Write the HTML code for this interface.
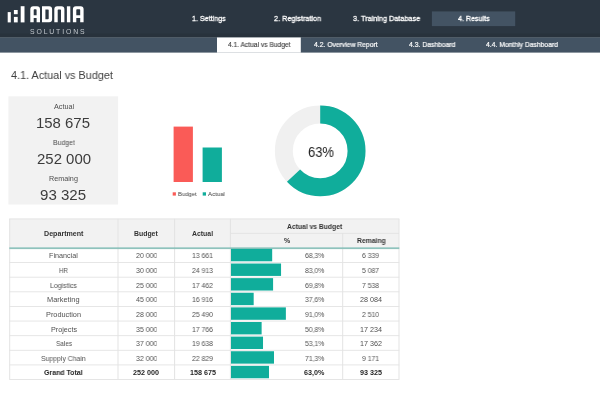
<!DOCTYPE html>
<html><head><meta charset="utf-8"><title>4.1. Actual vs Budget</title>
<style>
html,body{margin:0;padding:0;background:#fff;}
body{width:600px;height:403px;position:relative;overflow:hidden;font-family:"Liberation Sans", sans-serif;}
.b{position:absolute;}
.t{position:absolute;white-space:pre;line-height:1;transform-origin:0 50%;font-family:"Liberation Sans", sans-serif;will-change:transform;}
</style></head><body>
<svg class="b" style="left:0;top:0" width="600" height="403" viewBox="0 0 600 403">
<rect x="0.00" y="0.00" width="600.00" height="37.50" fill="#2b3641"/>
<rect x="0.00" y="33.50" width="600.00" height="4.00" fill="#28323c"/>
<rect x="0.00" y="37.50" width="600.00" height="15.10" fill="#435363"/>
<rect x="431.90" y="11.40" width="83.30" height="14.70" fill="#435363"/>
<rect x="217.00" y="37.50" width="83.80" height="15.20" fill="#ffffff"/>
<rect x="8.40" y="96.30" width="109.70" height="108.20" fill="#f2f2f2"/>
<rect x="173.60" y="126.60" width="19.30" height="55.40" fill="#fa5b57"/>
<rect x="202.60" y="147.50" width="19.30" height="34.50" fill="#10ad9b"/>
<rect x="172.70" y="192.30" width="3.20" height="3.30" fill="#fa5b57"/>
<rect x="202.70" y="192.30" width="3.30" height="3.30" fill="#10ad9b"/>
<rect x="9.30" y="218.70" width="389.70" height="28.70" fill="#f2f2f2"/>
<rect x="9.20" y="218.80" width="1.00" height="160.70" fill="#e3e3e3"/>
<rect x="117.50" y="218.80" width="1.00" height="160.70" fill="#e3e3e3"/>
<rect x="174.10" y="218.80" width="1.00" height="160.70" fill="#e3e3e3"/>
<rect x="229.90" y="218.80" width="1.00" height="160.70" fill="#e3e3e3"/>
<rect x="398.50" y="218.80" width="1.00" height="160.70" fill="#e3e3e3"/>
<rect x="342.20" y="233.00" width="1.00" height="146.50" fill="#e3e3e3"/>
<rect x="9.30" y="218.50" width="390.00" height="0.90" fill="#e3e3e3"/>
<rect x="230.00" y="232.90" width="169.00" height="0.90" fill="#e3e3e3"/>
<rect x="9.30" y="262.12" width="390.00" height="0.90" fill="#e3e3e3"/>
<rect x="9.30" y="276.74" width="390.00" height="0.90" fill="#e3e3e3"/>
<rect x="9.30" y="291.36" width="390.00" height="0.90" fill="#e3e3e3"/>
<rect x="9.30" y="305.98" width="390.00" height="0.90" fill="#e3e3e3"/>
<rect x="9.30" y="320.60" width="390.00" height="0.90" fill="#e3e3e3"/>
<rect x="9.30" y="335.22" width="390.00" height="0.90" fill="#e3e3e3"/>
<rect x="9.30" y="349.84" width="390.00" height="0.90" fill="#e3e3e3"/>
<rect x="9.30" y="364.46" width="390.00" height="0.90" fill="#e3e3e3"/>
<rect x="9.30" y="379.08" width="390.00" height="0.90" fill="#e3e3e3"/>
<rect x="9.30" y="247.30" width="390.00" height="1.80" fill="#8fc2bc"/>
<rect x="231.00" y="248.90" width="41.18" height="12.40" fill="#10ad9b"/>
<rect x="231.00" y="263.52" width="50.05" height="12.40" fill="#10ad9b"/>
<rect x="231.00" y="278.14" width="42.09" height="12.40" fill="#10ad9b"/>
<rect x="231.00" y="292.76" width="22.67" height="12.40" fill="#10ad9b"/>
<rect x="231.00" y="307.38" width="54.87" height="12.40" fill="#10ad9b"/>
<rect x="231.00" y="322.00" width="30.63" height="12.40" fill="#10ad9b"/>
<rect x="231.00" y="336.62" width="32.02" height="12.40" fill="#10ad9b"/>
<rect x="231.00" y="351.24" width="42.99" height="12.40" fill="#10ad9b"/>
<rect x="231.00" y="365.86" width="37.99" height="12.40" fill="#10ad9b"/>
<circle cx="320.2" cy="150.9" r="36.35" fill="none" stroke="#f0f0f0" stroke-width="17.90"/>
<circle cx="320.2" cy="150.9" r="36.35" fill="none" stroke="#10ad9b" stroke-width="17.90" stroke-dasharray="143.89 228.39" transform="rotate(-90 320.2 150.9)"/>
</svg>
<svg class="b" style="left:0;top:0" width="100" height="38" viewBox="0 0 100 38">
<g fill="#ffffff">
<rect x="7.7" y="12.1" width="3.1" height="10.3"/>
<rect x="13.9" y="10" width="3.8" height="4.2"/>
<rect x="13.9" y="16.9" width="3.8" height="5.5"/>
<rect x="20.7" y="6.2" width="3.8" height="16.2"/>
<!-- A -->
<path fill-rule="evenodd" d="M30.3 22.3V9.3a3 3 0 0 1 3-3h3.7a3 3 0 0 1 3 3v13h-3.4v-4.3h-2.9v4.3zM33.7 15.3h2.9V10a.7.7 0 0 0-.7-.7h-1.5a.7.7 0 0 0-.7.7z"/>
<!-- D -->
<path fill-rule="evenodd" d="M42 6.3h7.1a3 3 0 0 1 3 3v10a3 3 0 0 1-3 3H42zM45.4 9.4v9.8h2.6a.7.7 0 0 0 .7-.7V10.1a.7.7 0 0 0-.7-.7z"/>
<!-- N -->
<path d="M54.3 22.3V9.3a3 3 0 0 1 3-3h4.1a3 3 0 0 1 3 3v13H61V10.1a.7.7 0 0 0-.7-.7h-1.9a.7.7 0 0 0-.7.7v12.2z"/>
<!-- I -->
<rect x="66.9" y="6.3" width="3.4" height="16"/>
<!-- A -->
<path fill-rule="evenodd" d="M72.9 22.3V9.3a3 3 0 0 1 3-3h4.7a3 3 0 0 1 3 3v13h-3.4v-4.3h-3.9v4.3zM76.3 15.3h3.9V10a.7.7 0 0 0-.7-.7H77a.7.7 0 0 0-.7.7z"/>
</g>
</svg>
<span class="t" id="sol" style="left:30.3px;top:29px;font-size:6.9px;color:#c3c8cd;letter-spacing:1.84px">SOLUTIONS</span>
<span class="t" style="left:191.75px;top:15px;font-size:7.9px;font-weight:400;color:#ffffff;-webkit-text-stroke:0.3px #ffffff;transform:scaleX(0.9049)">1. Settings</span>
<span class="t" style="left:274.25px;top:15px;font-size:7.9px;font-weight:400;color:#ffffff;-webkit-text-stroke:0.3px #ffffff;transform:scaleX(0.9265)">2. Registration</span>
<span class="t" style="left:352.80px;top:15px;font-size:7.9px;font-weight:400;color:#ffffff;-webkit-text-stroke:0.3px #ffffff;transform:scaleX(0.9227)">3. Training Database</span>
<span class="t" style="left:457.90px;top:15px;font-size:7.9px;font-weight:400;color:#ffffff;-webkit-text-stroke:0.3px #ffffff;transform:scaleX(0.9004)">4. Results</span>
<span class="t" style="left:227.50px;top:42px;font-size:6.9px;font-weight:400;color:#3a3a3a;-webkit-text-stroke:0.12px #3a3a3a;transform:scaleX(0.9653)">4.1. Actual vs Budget</span>
<span class="t" style="left:314.30px;top:42px;font-size:6.9px;font-weight:400;color:#ffffff;-webkit-text-stroke:0.2px #ffffff;transform:scaleX(0.9840)">4.2. Overview Report</span>
<span class="t" style="left:409.30px;top:42px;font-size:6.9px;font-weight:400;color:#ffffff;-webkit-text-stroke:0.2px #ffffff;transform:scaleX(0.9846)">4.3. Dashboard</span>
<span class="t" style="left:486.00px;top:42px;font-size:6.9px;font-weight:400;color:#ffffff;-webkit-text-stroke:0.2px #ffffff;transform:scaleX(0.9840)">4.4. Monthly Dashboard</span>
<span class="t" style="left:10.80px;top:70px;font-size:11.3px;font-weight:400;color:#404040;transform:scaleX(0.9600)">4.1. Actual vs Budget</span>
<span class="t" style="left:53.80px;top:104px;font-size:7.1px;font-weight:400;color:#4d4d4d;transform:scaleX(1.0193)">Actual</span>
<span class="t" style="left:36.40px;top:116px;font-size:14.6px;font-weight:400;color:#3c3c3c;transform:scaleX(1.0234)">158 675</span>
<span class="t" style="left:52.90px;top:140px;font-size:7.1px;font-weight:400;color:#4d4d4d;transform:scaleX(0.9740)">Budget</span>
<span class="t" style="left:37.00px;top:152px;font-size:14.6px;font-weight:400;color:#3c3c3c;transform:scaleX(1.0253)">252 000</span>
<span class="t" style="left:49.10px;top:176px;font-size:7.1px;font-weight:400;color:#4d4d4d;transform:scaleX(1.0179)">Remaing</span>
<span class="t" style="left:40.10px;top:188px;font-size:14.6px;font-weight:400;color:#3c3c3c;transform:scaleX(1.0327)">93 325</span>
<span class="t" style="left:177.80px;top:191px;font-size:6.2px;font-weight:400;color:#3c3c3c;transform:scaleX(0.9478)">Budget</span>
<span class="t" style="left:208.00px;top:191px;font-size:6.2px;font-weight:400;color:#3c3c3c;transform:scaleX(0.9708)">Actual</span>
<span class="t" style="left:307.70px;top:146px;font-size:13.8px;font-weight:400;color:#1c1c1c;transform:scaleX(0.9412)">63%</span>
<span class="t" style="left:43.75px;top:231px;font-size:6.9px;font-weight:700;color:#333333;transform:scaleX(1.0314)">Department</span>
<span class="t" style="left:134.25px;top:231px;font-size:6.9px;font-weight:700;color:#333333;transform:scaleX(1.0007)">Budget</span>
<span class="t" style="left:192.00px;top:231px;font-size:6.9px;font-weight:700;color:#333333;transform:scaleX(0.9970)">Actual</span>
<span class="t" style="left:286.90px;top:224px;font-size:6.9px;font-weight:700;color:#333333;transform:scaleX(0.9805)">Actual vs Budget</span>
<span class="t" style="left:283.60px;top:238px;font-size:6.9px;font-weight:700;color:#333333;transform:scaleX(1.0097)">%</span>
<span class="t" style="left:356.50px;top:238px;font-size:6.9px;font-weight:700;color:#333333;transform:scaleX(0.9825)">Remaing</span>
<span class="t" style="left:49.40px;top:252px;font-size:7.2px;font-weight:400;color:#505050;transform:scaleX(0.9873)">Financial</span>
<span class="t" style="left:135.70px;top:252px;font-size:7.2px;font-weight:400;color:#505050;transform:scaleX(0.9734)">20 000</span>
<span class="t" style="left:192.00px;top:252px;font-size:7.2px;font-weight:400;color:#505050;transform:scaleX(0.9552)">13 661</span>
<span class="t" style="left:305.10px;top:252px;font-size:7.2px;font-weight:400;color:#505050;transform:scaleX(0.9465)">68,3%</span>
<span class="t" style="left:362.45px;top:252px;font-size:7.2px;font-weight:400;color:#505050;transform:scaleX(0.9500)">6 339</span>
<span class="t" style="left:59.20px;top:267px;font-size:7.2px;font-weight:400;color:#505050;transform:scaleX(0.8469)">HR</span>
<span class="t" style="left:135.70px;top:267px;font-size:7.2px;font-weight:400;color:#505050;transform:scaleX(0.9734)">30 000</span>
<span class="t" style="left:192.00px;top:267px;font-size:7.2px;font-weight:400;color:#505050;transform:scaleX(0.9552)">24 913</span>
<span class="t" style="left:305.10px;top:267px;font-size:7.2px;font-weight:400;color:#505050;transform:scaleX(0.9465)">83,0%</span>
<span class="t" style="left:362.45px;top:267px;font-size:7.2px;font-weight:400;color:#505050;transform:scaleX(0.9500)">5 087</span>
<span class="t" style="left:50.10px;top:282px;font-size:7.2px;font-weight:400;color:#505050;transform:scaleX(0.9654)">Logistics</span>
<span class="t" style="left:135.70px;top:282px;font-size:7.2px;font-weight:400;color:#505050;transform:scaleX(0.9734)">25 000</span>
<span class="t" style="left:192.00px;top:282px;font-size:7.2px;font-weight:400;color:#505050;transform:scaleX(0.9552)">17 462</span>
<span class="t" style="left:305.10px;top:282px;font-size:7.2px;font-weight:400;color:#505050;transform:scaleX(0.9465)">69,8%</span>
<span class="t" style="left:362.45px;top:282px;font-size:7.2px;font-weight:400;color:#505050;transform:scaleX(0.9500)">7 538</span>
<span class="t" style="left:47.35px;top:296px;font-size:7.2px;font-weight:400;color:#505050;transform:scaleX(1.0297)">Marketing</span>
<span class="t" style="left:135.70px;top:296px;font-size:7.2px;font-weight:400;color:#505050;transform:scaleX(0.9734)">45 000</span>
<span class="t" style="left:192.00px;top:296px;font-size:7.2px;font-weight:400;color:#505050;transform:scaleX(0.9552)">16 916</span>
<span class="t" style="left:305.10px;top:296px;font-size:7.2px;font-weight:400;color:#505050;transform:scaleX(0.9465)">37,6%</span>
<span class="t" style="left:360.20px;top:296px;font-size:7.2px;font-weight:400;color:#505050;transform:scaleX(0.9825)">28 084</span>
<span class="t" style="left:46.10px;top:311px;font-size:7.2px;font-weight:400;color:#505050;transform:scaleX(1.0182)">Production</span>
<span class="t" style="left:135.70px;top:311px;font-size:7.2px;font-weight:400;color:#505050;transform:scaleX(0.9734)">28 000</span>
<span class="t" style="left:192.00px;top:311px;font-size:7.2px;font-weight:400;color:#505050;transform:scaleX(0.9552)">25 490</span>
<span class="t" style="left:305.10px;top:311px;font-size:7.2px;font-weight:400;color:#505050;transform:scaleX(0.9465)">91,0%</span>
<span class="t" style="left:362.45px;top:311px;font-size:7.2px;font-weight:400;color:#505050;transform:scaleX(0.9500)">2 510</span>
<span class="t" style="left:50.55px;top:326px;font-size:7.2px;font-weight:400;color:#505050;transform:scaleX(1.0051)">Projects</span>
<span class="t" style="left:135.70px;top:326px;font-size:7.2px;font-weight:400;color:#505050;transform:scaleX(0.9734)">35 000</span>
<span class="t" style="left:192.00px;top:326px;font-size:7.2px;font-weight:400;color:#505050;transform:scaleX(0.9552)">17 766</span>
<span class="t" style="left:305.10px;top:326px;font-size:7.2px;font-weight:400;color:#505050;transform:scaleX(0.9465)">50,8%</span>
<span class="t" style="left:360.20px;top:326px;font-size:7.2px;font-weight:400;color:#505050;transform:scaleX(0.9825)">17 234</span>
<span class="t" style="left:55.60px;top:340px;font-size:7.2px;font-weight:400;color:#505050;transform:scaleX(0.8897)">Sales</span>
<span class="t" style="left:135.70px;top:340px;font-size:7.2px;font-weight:400;color:#505050;transform:scaleX(0.9734)">37 000</span>
<span class="t" style="left:192.00px;top:340px;font-size:7.2px;font-weight:400;color:#505050;transform:scaleX(0.9552)">19 638</span>
<span class="t" style="left:305.10px;top:340px;font-size:7.2px;font-weight:400;color:#505050;transform:scaleX(0.9465)">53,1%</span>
<span class="t" style="left:360.20px;top:340px;font-size:7.2px;font-weight:400;color:#505050;transform:scaleX(0.9825)">17 362</span>
<span class="t" style="left:41.30px;top:355px;font-size:7.2px;font-weight:400;color:#505050;transform:scaleX(0.9537)">Suppply Chain</span>
<span class="t" style="left:135.70px;top:355px;font-size:7.2px;font-weight:400;color:#505050;transform:scaleX(0.9734)">32 000</span>
<span class="t" style="left:192.00px;top:355px;font-size:7.2px;font-weight:400;color:#505050;transform:scaleX(0.9552)">22 829</span>
<span class="t" style="left:305.10px;top:355px;font-size:7.2px;font-weight:400;color:#505050;transform:scaleX(0.9465)">71,3%</span>
<span class="t" style="left:362.45px;top:355px;font-size:7.2px;font-weight:400;color:#505050;transform:scaleX(0.9500)">9 171</span>
<span class="t" style="left:44.30px;top:369px;font-size:7.2px;font-weight:700;color:#262626;transform:scaleX(0.9695)">Grand Total</span>
<span class="t" style="left:133.45px;top:369px;font-size:7.2px;font-weight:700;color:#262626;transform:scaleX(0.9968)">252 000</span>
<span class="t" style="left:189.70px;top:369px;font-size:7.2px;font-weight:700;color:#262626;transform:scaleX(0.9852)">158 675</span>
<span class="t" style="left:304.10px;top:369px;font-size:7.2px;font-weight:700;color:#262626;transform:scaleX(0.9956)">63,0%</span>
<span class="t" style="left:360.05px;top:369px;font-size:7.2px;font-weight:700;color:#262626;transform:scaleX(0.9962)">93 325</span>
</body></html>
